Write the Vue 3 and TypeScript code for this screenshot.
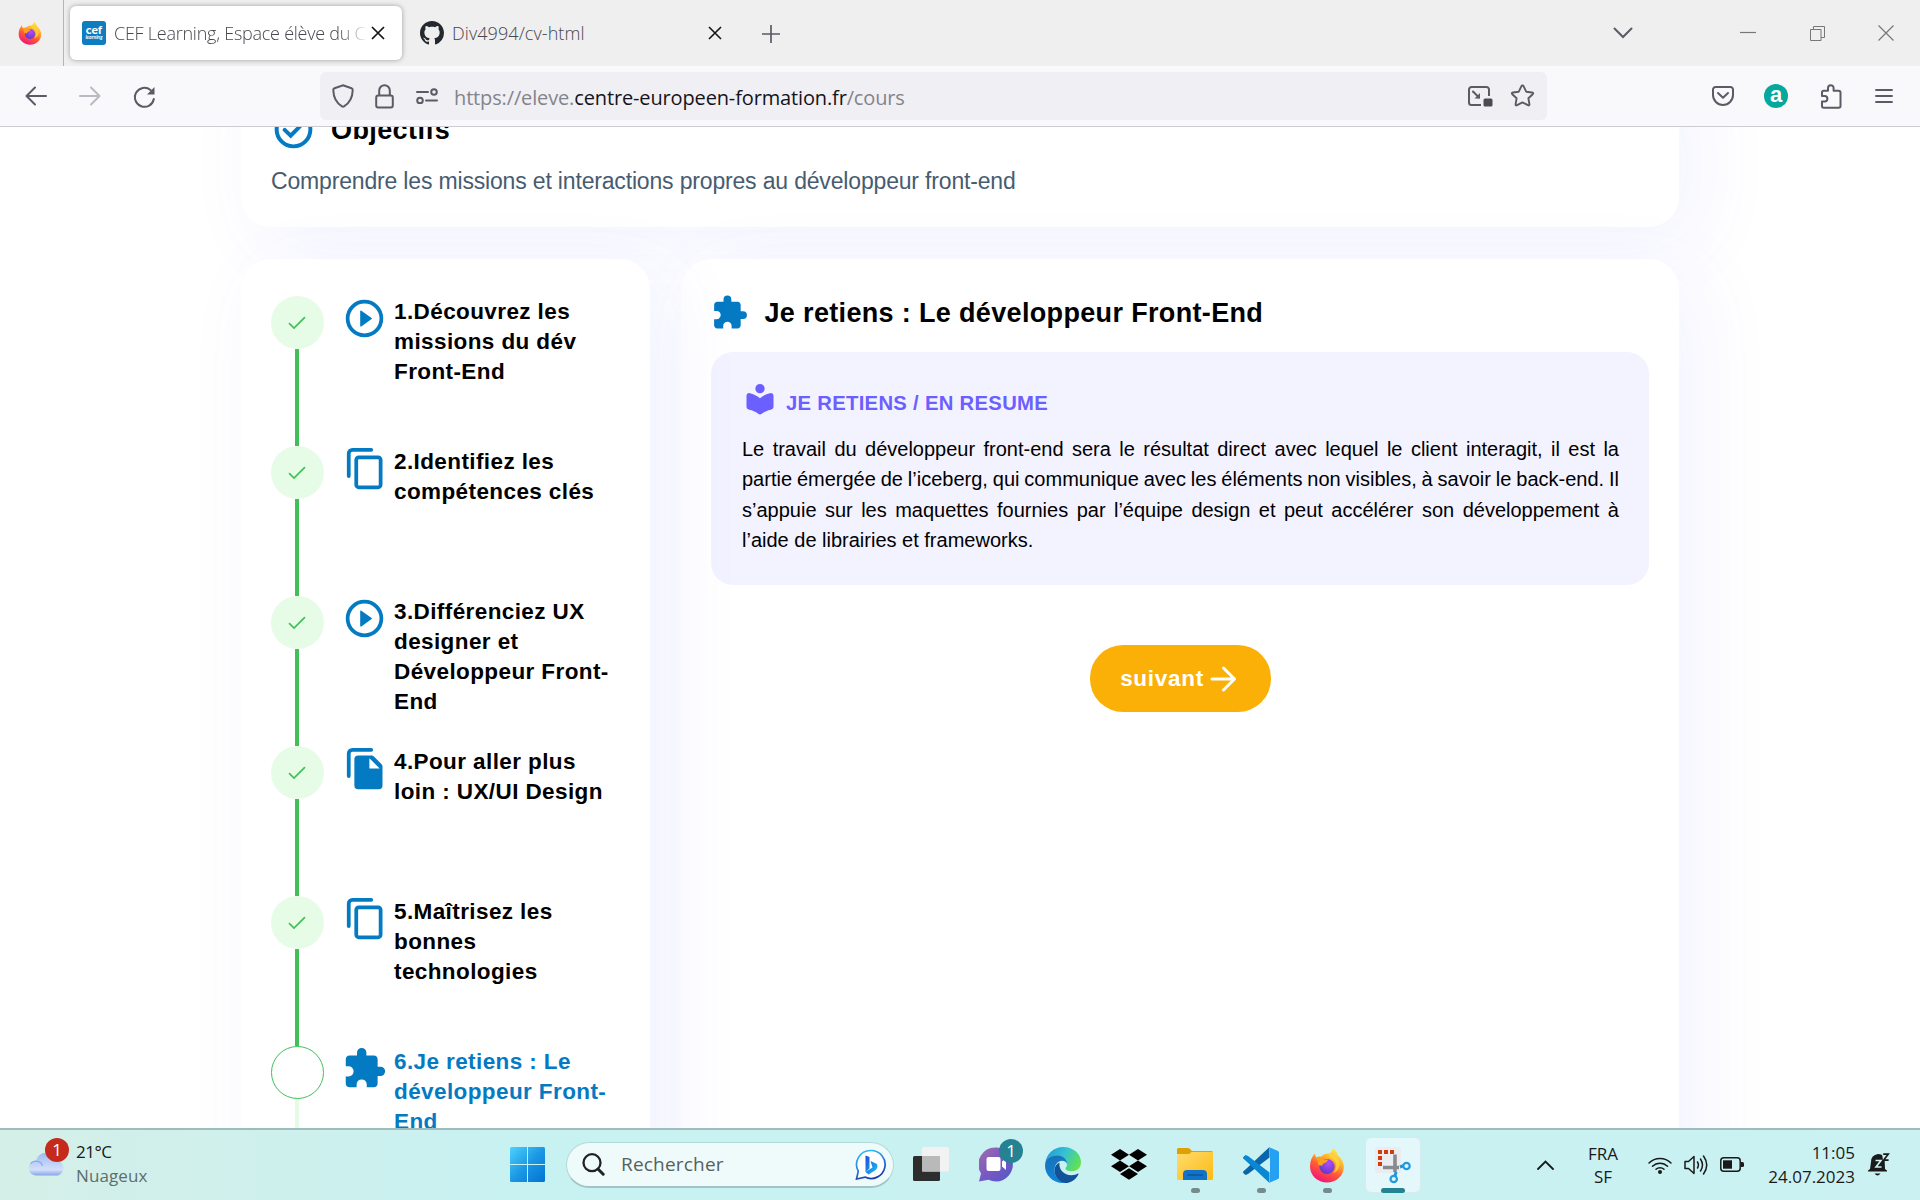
<script setup lang="ts">
type StepIcon = 'play' | 'copy' | 'file' | 'puzzle'

interface Step {
  id: number
  title: string
  icon: StepIcon
  done: boolean
}

const steps: Step[] = [
  { id: 1, title: 'Découvrez les missions du dév Front-End', icon: 'play', done: true },
  { id: 2, title: 'Identifiez les compétences clés', icon: 'copy', done: true },
  { id: 3, title: 'Différenciez UX designer et Développeur Front-End', icon: 'play', done: true },
  { id: 4, title: 'Pour aller plus loin : UX/UI Design', icon: 'file', done: true },
  { id: 5, title: 'Maîtrisez les bonnes technologies', icon: 'copy', done: true },
  { id: 6, title: 'Je retiens : Le développeur Front-End', icon: 'puzzle', done: false },
]

const summary: string[] = [
  'Le travail du développeur front-end sera le résultat direct avec lequel le client interagit, il est la',
  'partie émergée de l’iceberg, qui communique avec les éléments non visibles, à savoir le back-end. Il',
  's’appuie sur les maquettes fournies par l’équipe design et peut accélérer son développement à',
  'l’aide de librairies et frameworks.',
]
</script>

<template>
  <div class="screen">
    <!-- shared symbols -->
    <svg class="defs" width="0" height="0" aria-hidden="true">
      <defs>
        <linearGradient id="fxBody" x1=".8" y1="0" x2=".3" y2="1">
          <stop offset="0" stop-color="#fff44f" />
          <stop offset=".35" stop-color="#ffb02c" />
          <stop offset=".62" stop-color="#ff5a36" />
          <stop offset="1" stop-color="#f0127a" />
        </linearGradient>
        <radialGradient id="fxCore" cx=".6" cy=".3" r=".8">
          <stop offset="0" stop-color="#b14cf5" />
          <stop offset=".6" stop-color="#7a3fdc" />
          <stop offset="1" stop-color="#4a3bc0" />
        </radialGradient>
      </defs>
      <symbol id="firefox" viewBox="0 0 36 36">
        <path d="M24 1c3 2.500 4.300 5 5 7.500 3.300 3 5.800 6.500 5.800 11.300C34.800 29 27.300 35.500 18 35.500S1 28.500 1 19.500C1 14 3 9.500 6 6.500c0 1.800.5 3 1.300 4 1.700-1 3.200-1 5-.8C14 7.500 17 6.300 20.500 6.700 22 5 23.500 3.500 24 1z" fill="url(#fxBody)" />
        <circle cx="18" cy="19.500" r="7.600" fill="url(#fxCore)" />
        <path d="M7 11c3-1 5 0 7 1.500h4.500c1 1-.2 2.300-1.700 3-2.300 1-3.300 1.400-3.800 3.500-1.500-1-2.300-1-3.500-.5C9 15 8 13 7 11z" fill="#ffa01f" />
        <path d="M22 11c6 2 7 10 2 15 4-1 7-5 6.500-10C30 12 26 8.500 20.500 6.700 20 8 20.500 10 22 11z" fill="#ffd43a" opacity=".85" />
      </symbol>
      <symbol id="puzzle" viewBox="0 0 24 24">
        <path d="M20.500 11H19V7c0-1.100-.9-2-2-2h-4V3.500a2.500 2.500 0 0 0-5 0V5H4c-1.100 0-1.990.9-1.990 2v3.800H3.500a2.700 2.700 0 0 1 0 5.400H2V20c0 1.100.9 2 2 2h3.800v-1.500a2.700 2.700 0 0 1 5.400 0V22H17c1.100 0 2-.9 2-2v-4h1.500a2.500 2.500 0 0 0 0-5z" fill="#047ac3" />
      </symbol>
      <symbol id="play" viewBox="0 0 24 24">
        <circle cx="12" cy="12" r="9" fill="none" stroke="#047ac3" stroke-width="2" />
        <path d="M9.700 8v8q.1.5.6.2l5.500-3.900q.4-.3 0-.6L10.300 7.800q-.5-.3-.6.200z" fill="#047ac3" />
      </symbol>
      <symbol id="copy" viewBox="-0.600 0 24 24">
        <path d="M3 16V4a2 2 0 0 1 2-2h10" fill="none" stroke="#047ac3" stroke-width="2" stroke-linecap="round" />
        <rect x="7" y="6" width="13" height="16" rx="1.300" fill="none" stroke="#047ac3" stroke-width="2" />
      </symbol>
      <symbol id="file" viewBox="-0.600 0 24 24">
        <path d="M3 16V4a2 2 0 0 1 2-2h10" fill="none" stroke="#047ac3" stroke-width="2" stroke-linecap="round" />
        <path d="M15.200 5q.6 0 1.100.5l4.200 4.200q.5.500.5 1.200V21a2 2 0 0 1-2 2H8a2 2 0 0 1-2-2V7a2 2 0 0 1 2-2zM14 6.500V12h5.500z" fill="#047ac3" fill-rule="evenodd" />
      </symbol>
    </svg>

    <!-- tab strip -->
    <header class="tabs">
      <div class="pinned"><svg width="24" height="24"><use href="#firefox" /></svg></div>
      <div class="tab active">
        <span class="cef"><b>cef</b><i>learning</i></span>
        <span class="tab-title fade">CEF Learning, Espace élève du C</span>
        <svg class="tab-close" width="14" height="14" viewBox="0 0 14 14"><path d="M1 1l12 12M13 1L1 13" stroke="#15141a" stroke-width="1.700" /></svg>
      </div>
      <div class="tab">
        <svg width="24" height="24" viewBox="0 0 16 16"><path fill="#24292f" d="M8 0C3.580 0 0 3.580 0 8c0 3.540 2.290 6.530 5.470 7.590.4.070.55-.17.55-.38 0-.19-.01-.82-.01-1.490-2.010.37-2.530-.49-2.690-.94-.09-.23-.48-.94-.82-1.130-.28-.15-.68-.52-.01-.53.63-.01 1.080.58 1.230.82.72 1.210 1.870.87 2.330.66.070-.52.28-.87.51-1.070-1.780-.2-3.640-.89-3.640-3.950 0-.87.31-1.590.82-2.150-.08-.2-.36-1.020.08-2.120 0 0 .67-.21 2.200.82.64-.18 1.320-.27 2-.27s1.360.09 2 .27c1.530-1.040 2.200-.82 2.200-.82.44 1.100.16 1.920.08 2.120.51.56.82 1.270.82 2.150 0 3.070-1.870 3.750-3.650 3.950.29.25.54.73.54 1.480 0 1.070-.01 1.930-.01 2.200 0 .21.15.46.55.38A8.010 8.010 0 0 0 16 8c0-4.420-3.580-8-8-8z" /></svg>
        <span class="tab-title wide">Div4994/cv-html</span>
        <svg class="tab-close" width="14" height="14" viewBox="0 0 14 14"><path d="M1 1l12 12M13 1L1 13" stroke="#15141a" stroke-width="1.600" /></svg>
      </div>
      <svg class="plus" width="18" height="18" viewBox="0 0 18 18"><path d="M9 0v18M0 9h18" stroke="#5b5b66" stroke-width="1.700" /></svg>
      <div class="window-controls">
        <svg width="20" height="12" viewBox="0 0 20 12"><path d="M1.500 1.500L10 10l8.500-8.500" fill="none" stroke="#5b5b66" stroke-width="2" stroke-linecap="round" /></svg>
        <svg class="min" width="16" height="16" viewBox="0 0 16 16"><path d="M0 7.500h16" stroke="#777" stroke-width="1.200" /></svg>
        <svg class="restore" width="15" height="15" viewBox="0 0 15 15"><path d="M.5 3.500h10.500v11H.5zM3.500 3.500V.5h11v11H11" fill="none" stroke="#777" /></svg>
        <svg class="quit" width="16" height="16" viewBox="0 0 16 16"><path d="M.5.500l15 15M15.500.5l-15 15" stroke="#777" stroke-width="1.200" /></svg>
      </div>
    </header>

    <!-- navigation bar -->
    <nav class="toolbar">
      <svg class="back" width="22" height="20" viewBox="0 0 22 20"><path d="M21 10H2M10 1.500L1.500 10l8.500 8.500" fill="none" stroke="#5b5b66" stroke-width="2" stroke-linecap="round" stroke-linejoin="round" /></svg>
      <svg class="forward" width="22" height="20" viewBox="0 0 22 20"><path d="M1 10h19M12 1.500l8.500 8.500-8.500 8.500" fill="none" stroke="#b9b9c0" stroke-width="2" stroke-linecap="round" stroke-linejoin="round" /></svg>
      <svg class="reload" width="23" height="23" viewBox="0 0 23 23"><path d="M17.500 4A9.500 9.500 0 1 0 20.800 13" fill="none" stroke="#5b5b66" stroke-width="2" stroke-linecap="round" /><path d="M21.500 1v7.500h-7.500z" fill="#5b5b66" /></svg>
      <div class="urlbar">
        <svg width="22" height="24" viewBox="0 0 22 24"><path d="M11 1.200l8.500 3.100q1.300.5 1.200 1.900C20.500 13.500 17.500 19 12 22.400q-1 .6-2 0C4.500 19 1.500 13.500 1.300 6.200q-.1-1.400 1.200-1.900z" fill="none" stroke="#5b5b66" stroke-width="2" /></svg>
        <svg class="lock" width="19" height="25" viewBox="0 0 19 25"><rect x="1.200" y="11.500" width="16.600" height="12" rx="2" fill="none" stroke="#5b5b66" stroke-width="2" /><path d="M4.200 11V6.500a5.300 5.300 0 0 1 10.600 0V11" fill="none" stroke="#5b5b66" stroke-width="2" /></svg>
        <svg class="perm" width="22" height="16" viewBox="0 0 22 16"><g fill="none" stroke="#5b5b66" stroke-width="2"><path d="M1 4h11M10 12.500h11" stroke-linecap="round" /><circle cx="18" cy="4" r="2.800" /><circle cx="4" cy="12.500" r="2.800" /></g></svg>
        <span class="url">https://eleve.<em>centre-europeen-formation.fr</em>/cours</span>
        <svg class="pip" width="25" height="21" viewBox="0 0 25 21"><path d="M13 19H3.500A2.500 2.500 0 0 1 1 16.500v-13A2.500 2.500 0 0 1 3.500 1H18.500A2.500 2.500 0 0 1 21 3.500V10" fill="none" stroke="#5b5b66" stroke-width="2" /><rect x="15.500" y="12.500" width="9" height="8" rx="1.500" fill="#4a4a55" /><path d="M5 5.500l6 6" stroke="#5b5b66" stroke-width="2" stroke-linecap="round" /><path d="M12 7v5.500H6.500z" fill="#5b5b66" /></svg>
        <svg class="star" width="25" height="24" viewBox="0 0 25 24"><path d="M12.500 1.500q.8 0 1.200.9l2.500 5.300 5.900.8q1.800.4.600 1.700l-4.300 4.100 1 5.800q.2 1.900-1.500 1.100L12.500 18.400l-5.400 2.800q-1.700.8-1.500-1.100l1-5.800-4.300-4.100Q1.100 8.900 2.900 8.500l5.900-.8 2.500-5.300q.4-.9 1.200-.9z" fill="none" stroke="#5b5b66" stroke-width="1.900" stroke-linejoin="round" /></svg>
      </div>
      <svg class="pocket" width="22" height="20" viewBox="0 0 22 20"><path d="M3.500 1h15A2.500 2.500 0 0 1 21 3.500V9a10 10 0 0 1-20 0V3.500A2.500 2.500 0 0 1 3.500 1z" fill="none" stroke="#5b5b66" stroke-width="2" /><path d="M6 7l5 4.800L16 7" fill="none" stroke="#5b5b66" stroke-width="2" stroke-linecap="round" stroke-linejoin="round" /></svg>
      <span class="ext-a">a</span>
      <svg class="ext" width="22" height="25" viewBox="0 0 22 25"><path d="M2 8.500q0-1.800 1.800-1.800H8V4a2.800 2.800 0 0 1 5.600 0V6.700h5q1.900 0 1.900 1.800V22q0 1.800-1.900 1.800H3.800Q2 23.800 2 22V17.500H4.700a2.700 2.700 0 0 0 0-5.400H2z" fill="none" stroke="#5b5b66" stroke-width="2" stroke-linejoin="round" /></svg>
      <svg class="menu" width="18" height="16" viewBox="0 0 18 16"><path d="M1 2h16M1 8h16M1 14h16" stroke="#5b5b66" stroke-width="1.900" stroke-linecap="round" /></svg>
    </nav>

    <!-- course page -->
    <main class="page">
      <section class="card goals">
        <h2>
          <svg width="45" height="45" viewBox="0 0 24 24"><circle cx="12" cy="12" r="9" fill="none" stroke="#047ac3" stroke-width="2.100" /><path d="M7.300 12.200l3.200 3.100 6.200-6.300" fill="none" stroke="#047ac3" stroke-width="2.100" stroke-linecap="round" /></svg>
          <span>Objectifs</span>
        </h2>
        <p>Comprendre les missions et interactions propres au développeur front-end</p>
      </section>

      <div class="columns">
        <aside class="card steps">
          <div v-for="s in steps" :key="s.id" class="step" :class="{ current: !s.done }">
            <div class="marker">
              <span class="dot">
                <svg v-if="s.done" width="18" height="14" viewBox="0 0 18 14"><path d="M1.500 7.700L6 12 16.500 1.700" fill="none" stroke="#40c057" stroke-width="1.700" stroke-linecap="round" /></svg>
              </span>
              <span class="line"></span>
            </div>
            <svg class="step-icon" width="45" height="45"><use :href="'#' + s.icon" /></svg>
            <span class="step-title">{{ s.id }}.{{ s.title }}</span>
          </div>
        </aside>

        <section class="card lesson">
          <h1>
            <svg width="37.500" height="37.500"><use href="#puzzle" /></svg>
            <span>Je retiens : Le développeur Front-End</span>
          </h1>
          <div class="summary">
            <h3>
              <svg width="36" height="36" viewBox="0 0 24 24" fill="#6c5fff"><circle cx="12" cy="5.100" r="3.100" /><path d="M12 11.500c-1.900-1.700-4.200-2.900-6.800-3.400C3.900 7.900 3 8.800 3 10v7.200c0 1 .8 1.800 1.800 2 2.200.4 4.200 1.300 6 2.600q1.200.9 2.400 0c1.800-1.300 3.800-2.200 6-2.600 1-.2 1.800-1 1.800-2V10c0-1.200-.9-2.100-2.200-1.900-2.600.5-4.900 1.700-6.800 3.400z" /></svg>
              <span>JE RETIENS / EN RESUME</span>
            </h3>
            <p><span v-for="line in summary" :key="line">{{ line }}</span></p>
          </div>
          <button class="next">
            <span>suivant</span>
            <svg width="26" height="26" viewBox="0 0 26 26"><path d="M2 13h22M13.500 2l11 11-11 11" fill="none" stroke="#fff" stroke-width="3" stroke-linecap="round" stroke-linejoin="round" /></svg>
          </button>
        </section>
      </div>
    </main>

    <!-- taskbar -->
    <footer class="taskbar">
      <div class="weather">
        <div class="cloud">
          <svg width="37" height="26" viewBox="0 0 37 26">
            <defs><linearGradient id="cl" x1="0" y1="0" x2="0" y2="1"><stop offset="0" stop-color="#9fb9f3" /><stop offset=".75" stop-color="#d3e0fb" /><stop offset="1" stop-color="#88a4e8" /></linearGradient></defs>
            <path d="M7.500 25.500a7.500 7.500 0 0 1-.6-15A10.500 10.500 0 0 1 27 10a8 8 0 0 1 2 15.500z" fill="url(#cl)" />
            <path d="M1.500 13.500c4-4 11-2.500 12 2.500" fill="none" stroke="#8ba7ea" stroke-width="1.200" />
          </svg>
          <span class="badge red">1</span>
        </div>
        <div class="weather-text"><span class="temp">21°C</span><span class="sky">Nuageux</span></div>
      </div>

      <svg class="start" width="35" height="35" viewBox="0 0 35 35">
        <defs><linearGradient id="win" x1="0" y1="0" x2="1" y2="1"><stop offset="0" stop-color="#4cd2ff" /><stop offset=".5" stop-color="#1c98e4" /><stop offset="1" stop-color="#0073d3" /></linearGradient></defs>
        <path d="M1.500 0H17v17H0V1.500Q0 0 1.500 0zM18 0h15.500Q35 0 35 1.500V17H18zM0 18h17v17H1.500Q0 35 0 33.500zM18 18h17v15.500q0 1.500-1.500 1.500H18z" fill="url(#win)" />
      </svg>

      <div class="search">
        <svg width="23" height="23" viewBox="0 0 23 23"><circle cx="10" cy="9.700" r="8.500" fill="none" stroke="#222" stroke-width="2.300" /><path d="M16 16l5.200 5.200" stroke="#222" stroke-width="3" stroke-linecap="round" /></svg>
        <span>Rechercher</span>
        <svg class="bing" width="31" height="31" viewBox="0 0 31 31">
          <defs>
            <linearGradient id="bg1" x1="0" y1="0" x2=".4" y2="1"><stop offset="0" stop-color="#1fd0f0" /><stop offset=".5" stop-color="#2f86e6" /><stop offset="1" stop-color="#1a3fb0" /></linearGradient>
            <linearGradient id="bg2" x1="0" y1="0" x2="1" y2="1"><stop offset="0" stop-color="#1b4be0" /><stop offset="1" stop-color="#1cc6ee" /></linearGradient>
          </defs>
          <path d="M16 1.500a14 14 0 1 1-6 26.600L1.500 30l1.800-7.800A14 14 0 0 1 16 1.500z" fill="#fff" stroke="url(#bg1)" stroke-width="1.700" />
          <path d="M10.500 6.500l4 1.500v11.500l-4 3.500zM15.500 12l6.500 3q1.500 4-2 6.500l-6.500 4-3-2.500 7-4.500z" fill="url(#bg2)" />
        </svg>
      </div>

      <svg class="taskview" width="36" height="35" viewBox="0 0 36 35"><rect y="9" width="27" height="25" rx="1.500" fill="#2d2d2d" /><rect x="9" width="27" height="24.500" rx="1.500" fill="#f2f2f2" /><path d="M9 9h18v15.500H9z" fill="#b9b9b9" /></svg>

      <div class="app chat">
        <svg width="35" height="35" viewBox="0 0 35 35">
          <defs><linearGradient id="ch" x1="0" y1="0" x2="1" y2="1"><stop offset="0" stop-color="#a06fa8" /><stop offset=".5" stop-color="#7a58c4" /><stop offset="1" stop-color="#5059c9" /></linearGradient></defs>
          <path d="M17.500.5a17 17 0 1 1-8 32.300L0 34.500l2-8A17 17 0 0 1 17.500.5z" fill="url(#ch)" />
          <rect x="7.500" y="10" width="14" height="14" rx="2" fill="#fff" /><path d="M23 14.500l4-3.500v12l-4-3.500z" fill="#fff" />
        </svg>
        <span class="badge teal">1</span>
      </div>

      <svg class="edge" width="36" height="36" viewBox="0 0 36 36">
        <defs>
          <linearGradient id="e1" x1="0" y1=".2" x2="1" y2=".6"><stop offset="0" stop-color="#1f9ad8" /><stop offset=".5" stop-color="#36c2d0" /><stop offset="1" stop-color="#63e24f" /></linearGradient>
          <linearGradient id="e2" x1="0" y1="0" x2=".3" y2="1"><stop offset="0" stop-color="#1a6fb4" /><stop offset="1" stop-color="#0f86dc" /></linearGradient>
        </defs>
        <path d="M.3 16C1.500 6.500 9 0 18.300 0 28.500 0 36 7 36 15.200c0 5.800-4.300 9-9.200 9-3.800 0-6.300-1.200-6.300-2.800 0-1 1.500-1.500 1.500-4 0-3-3.500-5.800-9-5.800C7 11.600 2.500 13 .3 16z" fill="url(#e1)" />
        <path d="M.3 16C2 11.500 6.500 8.600 12.500 8.600c5.500 0 9.500 4 9.500 8.300-.7-2-2.800-3.200-5-3.200-4 0-7.500 4-7.500 9.300C9.500 29 13.500 34.500 20 35.900 8.500 37 0 28.500 0 18.500z" fill="url(#e2)" />
        <path d="M14.500 15.500c-1 7 4.500 12.800 12 12.800 2.500 0 4.800-.8 6.300-1.700.5-.2.900.2.600.8-2.400 5-7.900 8.600-13.400 8.600C13.500 35 9.500 29 9.500 23c0-3.500 2-6.300 5-7.500z" fill="#11529b" />
      </svg>

      <svg class="dropbox" width="36" height="31" viewBox="0 0 36 31"><path d="M9 0l9 5.700-9 5.700-9-5.700zM27 0l9 5.700-9 5.700-9-5.700zM9 11.600l9 5.700L9 23l-9-5.700zM27 11.600l9 5.700-9 5.700-9-5.700zM18 19.300l9 5.700-9 5.700L9 25z" fill="#000" /></svg>

      <div class="app folder running">
        <svg width="36" height="33" viewBox="0 0 36 33">
          <defs><linearGradient id="fo" x1="0" y1="0" x2="1" y2="1"><stop offset="0" stop-color="#ffdc6e" /><stop offset="1" stop-color="#fcba12" /></linearGradient></defs>
          <path d="M0 1.500Q0 0 1.500 0H11q1 0 2 1l2 2h19.500Q36 3 36 4.500V10H0z" fill="#e0a005" /><path d="M0 6h11.500q1 0 2-1l1-1H36v26.500q0 1.500-1.500 1.500h-33Q0 32 0 30.500z" fill="url(#fo)" />
          <path d="M6 32v-6q0-4 4-4h16q4 0 4 4v6z" fill="#1273c6" /><path d="M11 27h14" stroke="#0a559f" stroke-width="1.700" stroke-linecap="round" />
        </svg>
      </div>

      <div class="app vscode running">
        <svg width="36" height="36" viewBox="0 0 36 36"><path d="M26.500 0v10.500L5 27 2.500 28 .3 26q-.6-.7 0-1.400z" fill="#0a66ac" /><path d="M26.500 36V25.500L5 9 2.500 8 .3 10q-.6.700 0 1.400z" fill="#0a87d2" /><path d="M26 .2L35 4q1 .6 1 1.500v25q0 1-1 1.500l-9 3.900q1-.4 1-2V2q0-1.400-1-1.800z" fill="#26a1f2" /></svg>
      </div>

      <div class="app fx running"><svg width="36" height="36"><use href="#firefox" /></svg></div>

      <div class="app snip running focused">
        <svg width="40" height="40" viewBox="0 0 40 40">
          <rect x="2" y="2" width="26" height="26" rx="2" fill="#eaecef" />
          <path d="M5 5h4v4H5zM11 5h4v4h-4zM17 5h4v4h-4zM5 11h4v4H5zM5 17h4v4H5z" fill="#d13c0b" />
          <path d="M22 9.500V27M10 22.500h16" stroke="#868b90" stroke-width="3.600" fill="none" />
          <path d="M23 27l-1 4M27 22l4-1.500" stroke="#1e96d8" stroke-width="3" />
          <circle cx="33.500" cy="21" r="3.200" fill="#dff5fc" stroke="#1e9be0" stroke-width="2.200" /><circle cx="20.700" cy="34" r="3.200" fill="#dff5fc" stroke="#1e9be0" stroke-width="2.200" />
        </svg>
      </div>

      <div class="tray">
        <svg width="17" height="10" viewBox="0 0 17 10"><path d="M1 9l7.500-7.500L16 9" fill="none" stroke="#1a1a1a" stroke-width="1.800" stroke-linecap="round" /></svg>
        <div class="lang"><span>FRA</span><span>SF</span></div>
        <svg class="wifi" width="24" height="18" viewBox="0 0 24 18"><g fill="none" stroke="#1a1a1a" stroke-width="1.500" stroke-linecap="round"><path d="M1 7a15.500 15.500 0 0 1 22 0M4.500 10.300a10.500 10.500 0 0 1 15 0M8 13.300a5.700 5.700 0 0 1 8 0" /></g><circle cx="12" cy="16" r="2" fill="#1a1a1a" /></svg>
        <svg class="volume" width="24" height="20" viewBox="0 0 24 20"><g fill="none" stroke="#1a1a1a" stroke-width="1.500" stroke-linecap="round" stroke-linejoin="round"><path d="M1 6.500h3.500L10 1.500v17l-5.500-5H1zM13.500 7q1.800 3 0 6M16.500 4q4 6 0 12M19.500 1q6.500 9 0 18" /></g></svg>
        <svg class="battery" width="24" height="15" viewBox="0 0 24 15"><rect x=".8" y=".8" width="19.400" height="13.400" rx="3" fill="none" stroke="#1a1a1a" stroke-width="1.500" /><rect x="3" y="3.300" width="9" height="8.400" fill="#1a1a1a" /><path d="M21 5h1.500q1.500 0 1.500 1.500v2q0 1.500-1.500 1.500H21z" fill="#1a1a1a" /></svg>
        <div class="clock"><span>11:05</span><span>24.07.2023</span></div>
        <svg class="bell" width="22" height="24" viewBox="0 0 22 24"><path d="M3 9q0-7 7-8 4 0 6.500 3L17 16l2 1.500v1H0v-1L2 16z" fill="#1a1a1a" /><path d="M6.500 20.500h6q-3 4-6 0z" fill="#1a1a1a" /><path d="M7.500 7.500h5.500l-5 6.500h5.500" fill="none" stroke="#d0f2f3" stroke-width="1.600" /><path d="M14 .5h7v7h-6z" fill="#caf1f2" /><path d="M15.200 1.200h5l-4.600 6h5" fill="none" stroke="#1a1a1a" stroke-width="1.700" /></svg>
      </div>
    </footer>
  </div>
</template>

<style>
body {
  margin: 0;
  overflow: hidden;
}
</style>

<style scoped>
.screen {
  width: 1920px;
  height: 1200px;
  display: flex;
  flex-direction: column;
  overflow: hidden;
  background: #fff;
  font-family: 'Liberation Sans', Arial, sans-serif;
}
.screen svg {
  display: block;
  flex: none;
}
.screen .defs {
  position: absolute;
}

/* tab strip */
.tabs {
  height: 66px;
  flex: none;
  display: flex;
  align-items: center;
  background: #efefef;
  font-family: 'Open Sans', 'Noto Sans', sans-serif;
}
.pinned {
  width: 64px;
  height: 66px;
  box-sizing: border-box;
  padding: 0 0 0 18px;
  display: flex;
  align-items: center;
  border-right: 1px solid #b4b4b6;
}
.tab {
  height: 54px;
  width: 326px;
  box-sizing: border-box;
  padding: 0 12px;
  display: flex;
  align-items: center;
}
.tab.active {
  width: 332px;
  margin: 0 6px 0 6px;
  border-radius: 6px;
  background: #fff;
  box-shadow: 0 0 5px rgba(0, 0, 0, 0.35);
}
.cef {
  width: 24px;
  height: 24px;
  border-radius: 3px;
  background: #0e7cc0;
  color: #fff;
  display: flex;
  flex-direction: column;
  align-items: center;
  justify-content: center;
  font-family: Lato, sans-serif;
  line-height: 8px;
}
.cef b {
  font-size: 12px;
  font-weight: 900;
}
.cef i {
  font-size: 5px;
  font-weight: 700;
  line-height: 7px;
}
.tab-title {
  margin-left: 8px;
  font-size: 18px;
  font-weight: 300;
  letter-spacing: -0.25px;
  color: #47474f;
  white-space: nowrap;
}
.tab-title.wide {
  letter-spacing: 0.07px;
}
.fade {
  width: 252px;
  overflow: hidden;
  mask-image: linear-gradient(to right, #000 225px, transparent 254px);
}
.tab-close {
  margin-left: auto;
}
.tab.active .tab-close {
  margin-right: 5px;
}
.plus {
  margin: 2px 0 0 28px;
}
.window-controls {
  margin-left: auto;
  padding-right: 26px;
  display: flex;
  align-items: center;
}
.min {
  margin-left: 107px;
}
.restore {
  margin-left: 54px;
}
.quit {
  margin-left: 53px;
}

/* navigation bar */
.toolbar {
  height: 61px;
  flex: none;
  box-sizing: border-box;
  display: flex;
  align-items: center;
  padding: 0 27px 0 25px;
  background: #f9f9fb;
  border-bottom: 1px solid #ccccd1;
}
.forward {
  margin-left: 32px;
}
.reload {
  margin: 3px 0 0 32px;
}
.urlbar {
  width: 1227px;
  height: 48px;
  box-sizing: border-box;
  margin-left: 164px;
  padding: 0 12px;
  display: flex;
  align-items: center;
  border-radius: 6px;
  background: #f0eff4;
}
.lock {
  margin-left: 21px;
}
.perm {
  margin-left: 22px;
}
.url {
  margin: 2px 0 0 16px;
  font-family: 'Open Sans', 'Noto Sans', sans-serif;
  font-size: 20px;
  letter-spacing: -0.14px;
  color: #84848b;
  white-space: nowrap;
}
.url em {
  font-style: normal;
  color: #15141a;
}
.pip {
  margin-left: auto;
}
.star {
  margin-left: 17px;
}
.pocket {
  margin-left: auto;
}
.ext-a {
  width: 24px;
  height: 24px;
  margin-left: 30px;
  border-radius: 50%;
  background: #05a89d;
  color: #fff;
  font: 700 22px/21px 'Liberation Sans', sans-serif;
  text-align: center;
}
.ext {
  margin-left: 32px;
}
.menu {
  margin-left: 33px;
}

/* page */
.page {
  height: 1001px;
  flex: none;
  overflow: hidden;
}
.card {
  box-sizing: border-box;
  border-radius: 30px;
  background: #fff;
  box-shadow: 20px 15px 75px rgba(100, 105, 255, 0.08);
}
.goals {
  width: 1438px;
  height: 160px;
  margin: -60px 0 0 241px;
  padding: 40px 30px 0;
}
h1,
h2,
h3,
p {
  margin: 0;
}
.goals h2 {
  display: flex;
  align-items: flex-start;
  font-size: 27px;
  line-height: 45px;
  letter-spacing: 0.4px;
}
.goals h2 span {
  margin: 1px 0 0 15px;
}
.goals p {
  margin-top: 10px;
  font-size: 23px;
  line-height: 36px;
  letter-spacing: -0.17px;
  color: #475c70;
}
.columns {
  margin: 32px 0 0 241px;
  width: 1438px;
  display: flex;
  gap: 31px;
}
.steps {
  position: relative;
  z-index: 1;
  width: 409px;
  height: 1100px;
  flex: none;
  padding: 37px 30px 0;
}
.step {
  height: 150px;
  display: flex;
  align-items: flex-start;
}
.marker {
  width: 53px;
  height: 150px;
  display: flex;
  flex-direction: column;
  align-items: center;
}
.dot {
  width: 53px;
  height: 53px;
  box-sizing: border-box;
  flex: none;
  display: flex;
  align-items: center;
  justify-content: center;
  padding: 0 1px 0 0;
  border-radius: 50%;
  background: #e7fce6;
}
.line {
  width: 4px;
  margin-right: 1px;
  flex: 1;
  background: #40c057;
}
.step-icon {
  margin-left: 18px;
}
.step-title {
  width: 226px;
  margin: 1px 0 0 7px;
  font-size: 22.5px;
  font-weight: 700;
  line-height: 30px;
  letter-spacing: 0.4px;
}
.current .dot {
  background: #fff;
  border: 1px solid #40c057;
}
.current .line {
  background: #e6fbe5;
}
.current .step-title {
  color: #047ac3;
}

.lesson {
  flex: 1;
  height: 1100px;
  padding: 35px 30px 0;
  display: flex;
  flex-direction: column;
  align-items: center;
}
.lesson h1 {
  align-self: stretch;
  display: flex;
  align-items: center;
  font-size: 27px;
  line-height: 38px;
  letter-spacing: 0.34px;
}
.lesson h1 span {
  margin-left: 16px;
}
.summary {
  align-self: stretch;
  height: 233px;
  box-sizing: border-box;
  margin-top: 20px;
  padding: 29px 30px 0;
  border-radius: 22px;
  background: #f3f2ff;
}
.summary h3 {
  display: flex;
  align-items: flex-start;
  font-size: 20.25px;
  line-height: 36px;
  letter-spacing: 0.3px;
  color: #6c5fff;
}
.summary h3 svg {
  margin-left: 1px;
}
.summary h3 span {
  margin: 4px 0 0 8px;
}
.summary p {
  margin: 13px 0 0 1px;
  font-size: 20px;
  line-height: 30.4px;
}
.summary p span {
  display: block;
  white-space: nowrap;
  word-spacing: -2px;
  text-align: justify;
  text-align-last: justify;
}
.summary p span:last-child {
  word-spacing: 0;
  text-align-last: left;
}
.next {
  width: 181px;
  height: 67px;
  margin-top: 60px;
  padding: 0 4px 0 0;
  display: flex;
  align-items: center;
  justify-content: center;
  gap: 6px;
  border: 0;
  border-radius: 33px;
  background: #fbb007;
  color: #fff;
  font: 700 22.5px 'Liberation Sans', sans-serif;
  letter-spacing: 0.7px;
}

/* taskbar */
.taskbar {
  flex: 1;
  box-sizing: border-box;
  display: flex;
  align-items: center;
  padding-bottom: 1px;
  border-top: 2px solid #9fbcbd;
  background: linear-gradient(to right, #d4efe8 0, #cff0ec 240px, #c8f1f1 500px, #cbf1f2 100%);
  font-family: 'Open Sans', 'Noto Sans', sans-serif;
  font-size: 17px;
  color: #1a1a1a;
}
.weather {
  width: 481px;
  display: flex;
  padding-left: 29px;
  box-sizing: border-box;
  align-items: center;
}
.cloud {
  position: relative;
  margin-bottom: 4px;
}
.badge {
  position: absolute;
  width: 24px;
  height: 24px;
  border-radius: 50%;
  color: #fff;
  font-size: 17px;
  line-height: 24px;
  text-align: center;
}
.badge.red {
  left: 16px;
  top: -12px;
  background: #c42b1c;
}
.badge.teal {
  left: 20px;
  top: -8px;
  background: #258292;
}
.weather-text {
  display: flex;
  flex-direction: column;
  margin: 0 0 1px 10px;
  line-height: 24px;
  letter-spacing: -0.5px;
}
.weather-text .sky {
  letter-spacing: 0.1px;
  color: #5d6d6d;
}
.start {
  margin-left: 29px;
}
.search {
  width: 328px;
  height: 46px;
  box-sizing: border-box;
  margin-left: 21px;
  padding: 0 7px 0 15px;
  display: flex;
  align-items: center;
  border: 1px solid #b5d9da;
  border-bottom: 2px solid #9fc5c6;
  border-radius: 23px;
  background: #effbfb;
  font-size: 19px;
  letter-spacing: 0.2px;
  color: #566060;
}
.search span {
  margin-left: 16px;
}
.bing {
  margin-left: auto;
}
.taskview {
  margin-left: 19px;
}
.app {
  position: relative;
}
.chat {
  margin-left: 30px;
}
.edge {
  margin-left: 31px;
}
.dropbox {
  margin: 0 30px;
}
.vscode,
.fx {
  margin-left: 30px;
}
.running::after {
  content: '';
  position: absolute;
  left: 50%;
  top: calc(50% + 23px);
  width: 9px;
  height: 5px;
  margin-left: -4px;
  border-radius: 3px;
  background: #758b8c;
}
.snip {
  width: 56px;
  height: 56px;
  box-sizing: border-box;
  margin-left: 20px;
  padding: 7px 7px;
  border: 1px solid #d5ecef;
  border-radius: 6px;
  background: #e4f7fb;
}
.focused::after {
  width: 24px;
  margin-left: -12px;
  background: #258292;
}
.tray {
  margin-left: auto;
  padding-right: 30px;
  display: flex;
  align-items: center;
}
.lang {
  width: 50px;
  margin-left: 24px;
  display: flex;
  flex-direction: column;
  align-items: center;
  line-height: 23px;
}
.wifi {
  margin-left: 20px;
}
.volume {
  margin-left: 12px;
}
.battery {
  margin-left: 12px;
}
.clock {
  width: 111px;
  display: flex;
  flex-direction: column;
  align-items: flex-end;
  line-height: 24px;
}
.bell {
  margin-left: 13px;
}
</style>
